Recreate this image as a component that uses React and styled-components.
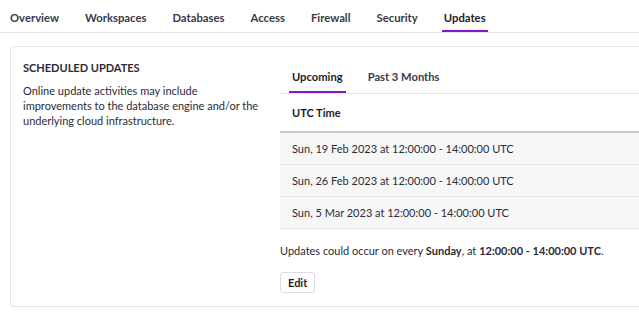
import React, { useState } from "react";
import styled, { createGlobalStyle } from "styled-components";

const GlobalStyle = createGlobalStyle`
    html, body {
        margin: 0;
        padding: 0;
        overflow: hidden;
        background: #fff;
    }
    body {
        font-family: Lato, "Open Sans", sans-serif;
        color: #2b2b36;
        -webkit-font-smoothing: antialiased;
    }
`;

const TOP_TABS = ["Overview", "Workspaces", "Databases", "Access", "Firewall", "Security", "Updates"];
const SLOTS = [
    "Sun, 19 Feb 2023 at 12:00:00 - 14:00:00 UTC",
    "Sun, 26 Feb 2023 at 12:00:00 - 14:00:00 UTC",
    "Sun, 5 Mar 2023 at 12:00:00 - 14:00:00 UTC",
];

const App = () => {
    const [tab, setTab] = useState("Updates");
    const [range, setRange] = useState("upcoming");

    return (
        <Page>
            <GlobalStyle />
            <TabBar>
                {TOP_TABS.map((t) => (
                    <Tab key={t} $active={tab === t} onClick={() => setTab(t)}>
                        {t}
                    </Tab>
                ))}
            </TabBar>

            <Card>
                <Info>
                    <Heading>Scheduled Updates</Heading>
                    <Description>
                        Online update activities may include improvements to the
                        database engine and/or the underlying cloud infrastructure.
                    </Description>
                </Info>

                <Schedule>
                    <SubTabs>
                        <SubTab
                            $active={range === "upcoming"}
                            onClick={() => setRange("upcoming")}
                        >
                            Upcoming
                        </SubTab>
                        <SubTab
                            $active={range === "past"}
                            onClick={() => setRange("past")}
                        >
                            Past 3 Months
                        </SubTab>
                    </SubTabs>

                    <Table>
                        <thead>
                            <tr>
                                <HeadCell>UTC Time</HeadCell>
                            </tr>
                        </thead>
                        <tbody>
                            {SLOTS.map((s) => (
                                <Row key={s}>
                                    <Cell>{s}</Cell>
                                </Row>
                            ))}
                        </tbody>
                    </Table>

                    <Note>
                        Updates could occur on every <b>Sunday</b>, at{" "}
                        <b>12:00:00 - 14:00:00 UTC</b>.
                    </Note>
                    <EditButton>Edit</EditButton>
                </Schedule>
            </Card>
        </Page>
    );
};

const Page = styled.div`
    width: 680px;
`;

const TabBar = styled.div`
    display: flex;
    gap: 22px;
    padding-left: 8px;
    border-bottom: 1px solid #e4e4ea;
`;

const Tab = styled.div`
    padding: 10px 2px 4px;
    font-size: 11.3px;
    line-height: 16px;
    font-weight: 700;
    color: ${(p) => (p.$active ? "#1d1d28" : "#3a3a48")};
    border-bottom: 2px solid ${(p) => (p.$active ? "#8a14c8" : "transparent")};
    cursor: pointer;
`;

const Card = styled.div`
    display: grid;
    grid-template-columns: 257px 1fr;
    margin: 13px 0 0 10px;
    padding: 14px 0 13px 12px;
    border: 1px solid #e4e4ea;
    border-radius: 4px;
    background: #fff;
`;

const Info = styled.div`
    padding-right: 12px;
`;

const Heading = styled.div`
    font-size: 11px;
    line-height: 14px;
    font-weight: 700;
    text-transform: uppercase;
    color: #2b2b36;
`;

const Description = styled.p`
    margin: 8px 0 0;
    font-size: 11px;
    line-height: 15px;
    color: #2b2b36;
`;

const Schedule = styled.div`
    display: flex;
    flex-direction: column;
    align-items: flex-start;
`;

const SubTabs = styled.div`
    display: flex;
    gap: 19px;
    align-self: stretch;
    padding-left: 9px;
    border-bottom: 1px solid #e4e4ea;
`;

const SubTab = styled.div`
    padding: 8px 3px 6px;
    font-size: 11.2px;
    line-height: 16px;
    font-weight: 700;
    color: ${(p) => (p.$active ? "#1d1d28" : "#3a3a48")};
    border-bottom: 2px solid ${(p) => (p.$active ? "#8a14c8" : "transparent")};
    cursor: pointer;
`;

const Table = styled.table`
    width: 100%;
    border-collapse: collapse;
    font-size: 11px;
    line-height: 16px;
`;

const HeadCell = styled.th`
    height: 37px;
    padding: 0 12px;
    text-align: left;
    font-weight: 700;
    color: #1d1d28;
    border-bottom: 2px solid #c9c9d3;
`;

const Row = styled.tr`
    background: #f7f7f8;
    border-bottom: 1px solid #e4e4ea;
`;

const Cell = styled.td`
    height: 31px;
    padding: 0 12px;
    color: #2b2b36;
`;

const Note = styled.p`
    margin: 14px 0 0;
    font-size: 11px;
    line-height: 16px;
    color: #2b2b36;

    & b {
        font-weight: 700;
    }
`;

const EditButton = styled.button`
    margin-top: 13px;
    height: 21px;
    padding: 0 7px;
    font-family: inherit;
    font-size: 11px;
    font-weight: 700;
    color: #1d1d28;
    background: #fff;
    border: 1px solid #dcdce2;
    border-radius: 3px;
    cursor: pointer;
`;

export default App;
